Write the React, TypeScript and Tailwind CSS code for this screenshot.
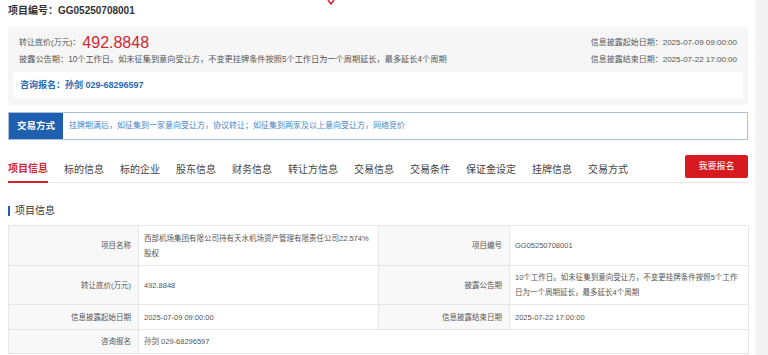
import React from "react";

const font = { fontFamily: '"Liberation Sans", "Noto Sans CJK SC", sans-serif' };

const tabs = ["项目信息", "标的信息", "标的企业", "股东信息", "财务信息", "转让方信息", "交易信息", "交易条件", "保证金设定", "挂牌信息", "交易方式"];

function Label({ children, h }: { children: React.ReactNode; h: string }) {
  return (
    <div className={`flex items-center justify-end border-b border-r border-[#e6e6e6] bg-[#f8f8f8] pr-[7px] text-[7.5px] text-[#555] ${h}`}>
      {children}
    </div>
  );
}

function Value({ children, h, span }: { children: React.ReactNode; h: string; span?: boolean }) {
  return (
    <div className={`flex items-center border-b border-r border-[#e6e6e6] bg-white px-[5px] text-[7.5px] leading-[15px] text-[#555] ${h} ${span ? "col-span-3" : ""}`}>
      <div>{children}</div>
    </div>
  );
}

export default function App() {
  return (
    <div style={font} className="flex h-[355px] w-[768px] overflow-hidden bg-white">
      <div className="relative w-[755px] pl-2 pr-[7px]">
        <svg className="absolute left-[326px] top-0" width="10" height="6" viewBox="0 0 10 6">
          <path d="M2 0 L5 4 L8 0" stroke="#d0262f" strokeWidth="1.6" fill="none" />
        </svg>

        <div className="pt-[4px] text-[10px] font-bold leading-[13px] text-[#333]">项目编号：GG05250708001</div>

        <div className="mt-[10px] bg-[#f6f6f6] px-[5px] pb-[7px] pt-[6px]">
          <div className="flex items-center justify-between px-[6px]">
            <div className="flex items-center">
              <span className="text-[8px] text-[#555]">转让底价(万元)：</span>
              <span className="ml-[2px] text-[16px] leading-[20px] text-[#d0262f]">492.8848</span>
            </div>
            <span className="text-[8px] text-[#555]">信息披露起始日期：2025-07-09 09:00:00</span>
          </div>
          <div className="mt-[1px] flex items-center justify-between px-[6px]">
            <span className="text-[8.2px] text-[#555]">披露公告期：10个工作日。如未征集到意向受让方，不变更挂牌条件按照5个工作日为一个周期延长，最多延长4个周期</span>
            <span className="text-[8px] text-[#555]">信息披露结束日期：2025-07-22 17:00:00</span>
          </div>
          <div className="mt-[6px] flex h-[26px] items-center rounded-[3px] bg-white px-[7px] text-[9px] font-bold text-[#2a6bb5]">
            咨询报名：孙剑 029-68296597
          </div>
        </div>

        <div className="mt-[7px] flex h-[28px] border border-[#a9bfdc]">
          <div className="flex w-[54px] items-center justify-center bg-[#1f5fb0] text-[9.5px] font-bold text-white">交易方式</div>
          <div className="flex items-center pl-[6px] text-[8px] text-[#4a86c8]">
            挂牌期满后，如征集到一家意向受让方，协议转让；如征集到两家及以上意向受让方，网络竞价
          </div>
        </div>

        <div className="mt-[12px] flex h-[31px] items-start justify-between border-b border-[#e8e8e8]">
          <div className="flex gap-[16px]">
            {tabs.map((t, i) => (
              <div
                key={t}
                className={`flex h-[31px] items-center pt-[4px] text-[10px] ${i === 0 ? "border-b-2 border-[#d0262f] font-bold text-[#d0262f]" : "text-[#444]"}`}
              >
                {t}
              </div>
            ))}
          </div>
          <div className="mt-[3px] flex h-[23px] w-[63px] items-center justify-center rounded-[2px] bg-[#d71920] text-[9px] text-white">我要报名</div>
        </div>

        <div className="mt-[20px] flex items-center">
          <div className="h-[10px] w-[2px] bg-[#1f5fb0]" />
          <span className="ml-[5px] text-[10px] text-[#333]">项目信息</span>
        </div>

        <div className="mt-[7px] grid grid-cols-[130px_240px_131px_239px] border-l border-t border-[#e6e6e6]">
          <Label h="h-[40px]">项目名称</Label>
          <Value h="h-[40px]">
            <span className="whitespace-nowrap">西部机场集团有限公司持有天水机场资产管理有限责任公司22.574%</span>
            <br />
            股权
          </Value>
          <Label h="h-[40px]">项目编号</Label>
          <Value h="h-[40px]">GG05250708001</Value>

          <Label h="h-[39px]">转让底价(万元)</Label>
          <Value h="h-[39px]">492.8848</Value>
          <Label h="h-[39px]">披露公告期</Label>
          <Value h="h-[39px]">
            10个工作日。如未征集到意向受让方，不变更挂牌条件按照5个工作
            <br />
            日为一个周期延长，最多延长4个周期
          </Value>

          <Label h="h-[25px]">信息披露起始日期</Label>
          <Value h="h-[25px]">2025-07-09 09:00:00</Value>
          <Label h="h-[25px]">信息披露结束日期</Label>
          <Value h="h-[25px]">2025-07-22 17:00:00</Value>

          <Label h="h-[24px]">咨询报名</Label>
          <Value h="h-[24px]" span>孙剑 029-68296597</Value>
        </div>
      </div>
      <div className="w-[13px] bg-[#f3f3f3]" />
    </div>
  );
}
